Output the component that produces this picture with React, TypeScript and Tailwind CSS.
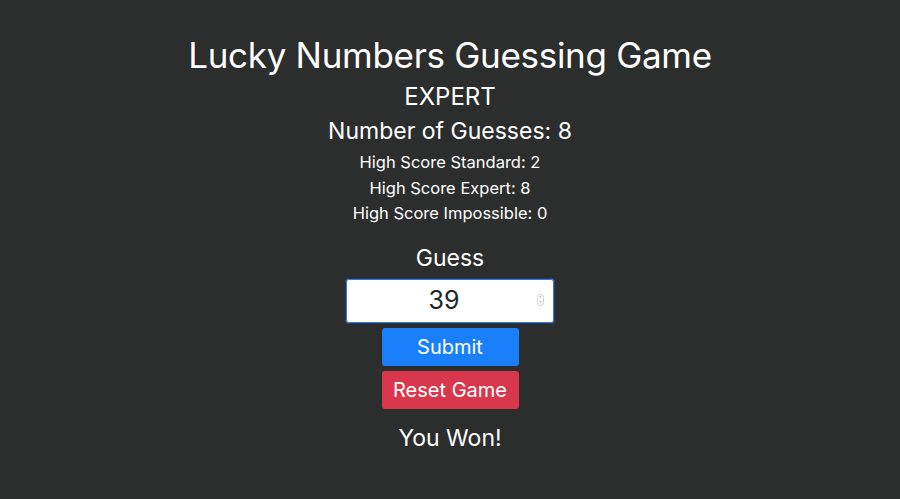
import React from "react";

export default function App() {
  return (
    <div className="w-[900px] h-[499px] bg-[#2c2d2d] text-white flex flex-col items-center overflow-hidden" style={{ fontFamily: "Inter, 'Noto Sans', sans-serif" }}>
      <h1 className="mt-[33px] text-[35px] leading-[44px] font-normal tracking-[-0.3px]">Lucky Numbers Guessing Game</h1>
      <div className="mt-[4px] text-[24px] leading-[32px]">EXPERT</div>
      <div className="mt-[2px] text-[23px] leading-[32px]">Number of Guesses: 8</div>
      <div className="mt-[2px] text-[16.5px] leading-[26px]">High Score Standard: 2</div>
      <div className="text-[16.5px] leading-[26px]">High Score Expert: 8</div>
      <div className="text-[16.5px] leading-[25px]">High Score Impossible: 0</div>
      <div className="mt-[16px] text-[23px] leading-[32px]">Guess</div>
      <div className="mt-[4px] w-[210px] h-[46px] bg-white rounded-[4px] border border-[#1d3a66] shadow-[inset_0_0_0_1px_#3b78d0] flex items-center relative">
        <span className="flex-1 text-center text-[25px] text-[#212529] pr-[12px]">39</span>
        <span className="absolute right-[10px] top-[15px] w-[7px] h-[12px] rounded-full border border-[#d0d0d0] flex flex-col items-center justify-center text-[5px] leading-[5px] text-[#888]">
          <span>˄</span>
          <span>˅</span>
        </span>
      </div>
      <button className="mt-[4px] w-[137px] h-[38px] bg-[#1a7ffb] rounded-[3px] text-[20px] text-white">Submit</button>
      <button className="mt-[5px] w-[137px] h-[38px] bg-[#d9374b] rounded-[3px] text-[20px] text-white">Reset Game</button>
      <div className="mt-[13px] text-[23px] leading-[32px]">You Won!</div>
    </div>
  );
}
